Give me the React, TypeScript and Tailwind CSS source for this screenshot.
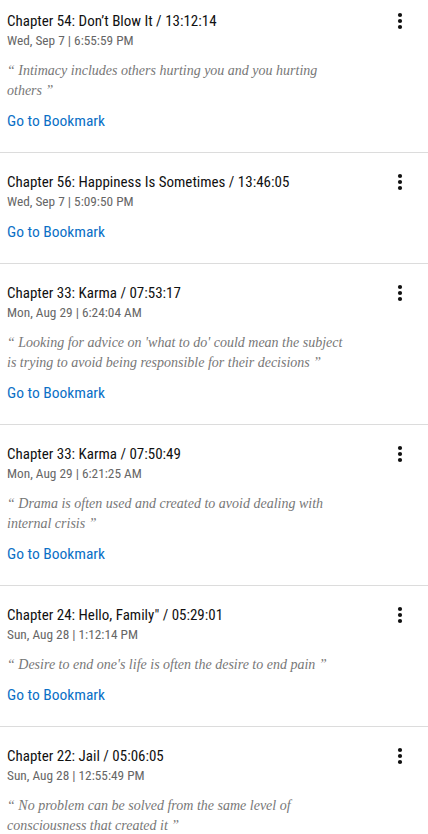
import React from "react";

type Item = { title: string; date: string; quote?: string; first?: boolean };

const items: Item[] = [
  { title: "Chapter 54: Don\u2019t Blow It / 13:12:14", date: "Wed, Sep 7 | 6:55:59 PM", quote: "Intimacy includes others hurting you and you hurting others", first: true },
  { title: "Chapter 56: Happiness Is Sometimes / 13:46:05", date: "Wed, Sep 7 | 5:09:50 PM" },
  { title: "Chapter 33: Karma / 07:53:17", date: "Mon, Aug 29 | 6:24:04 AM", quote: "Looking for advice on 'what to do' could mean the subject is trying to avoid being responsible for their decisions" },
  { title: "Chapter 33: Karma / 07:50:49", date: "Mon, Aug 29 | 6:21:25 AM", quote: "Drama is often used and created to avoid dealing with internal crisis" },
  { title: "Chapter 24: Hello, Family\" / 05:29:01", date: "Sun, Aug 28 | 1:12:14 PM", quote: "Desire to end one's life is often the desire to end pain" },
  { title: "Chapter 22: Jail / 05:06:05", date: "Sun, Aug 28 | 12:55:49 PM", quote: "No problem can be solved from the same level of consciousness that created it" },
];

function Kebab() {
  return (
    <svg width="6" height="18" viewBox="0 0 6 18" className="text-[#111]">
      <circle cx="3" cy="3" r="2.1" fill="currentColor" />
      <circle cx="3" cy="9" r="2.1" fill="currentColor" />
      <circle cx="3" cy="15" r="2.1" fill="currentColor" />
    </svg>
  );
}

export default function App() {
  return (
    <div className="w-[428px] h-[834px] overflow-hidden bg-white">
      {items.map((it, i) => (
        <div
          key={i}
          className={`border-b border-[#dcdcdc] pl-[7px] pr-[25px] pb-[21px] ${it.first ? "pt-[11px]" : "pt-[19px]"}`}
        >
          <div className="flex items-start justify-between">
            <div className="flex flex-col">
              <div className="text-[15px] leading-[20px] text-[#111] font-['Liberation_Sans_Narrow','Roboto_Condensed','Liberation_Sans',sans-serif]">
                {it.title}
              </div>
              <div className="text-[13.3px] leading-[20px] text-[#666] font-['Liberation_Sans_Narrow','Roboto_Condensed','Liberation_Sans',sans-serif]">
                {it.date}
              </div>
            </div>
            <div className="h-[20px] flex items-center">
              <Kebab />
            </div>
          </div>
          {it.quote && (
            <div className="mt-[10px] max-w-[348px] text-[14px] leading-[20px] italic text-[#777] font-['Liberation_Serif',serif]">
              {"\u201C "}
              {it.quote}
              {" \u201D"}
            </div>
          )}
          <div className="mt-[10px] text-[15.5px] leading-[20px] text-[#0b70c6] font-['Liberation_Sans_Narrow','Roboto_Condensed','Liberation_Sans',sans-serif]">
            Go to Bookmark
          </div>
        </div>
      ))}
    </div>
  );
}
